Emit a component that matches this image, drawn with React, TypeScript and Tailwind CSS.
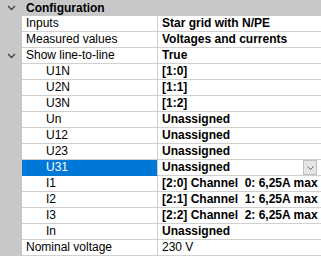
import React from 'react';

type Row = {
  name: string;
  value: string;
  indent?: boolean;
  bold?: boolean;
  expander?: boolean;
  selected?: boolean;
};

const rows: Row[] = [
  { name: 'Inputs', value: 'Star grid with N/PE', bold: true },
  { name: 'Measured values', value: 'Voltages and currents', bold: true },
  { name: 'Show line-to-line', value: 'True', bold: true, expander: true },
  { name: 'U1N', value: '[1:0]', indent: true, bold: true },
  { name: 'U2N', value: '[1:1]', indent: true, bold: true },
  { name: 'U3N', value: '[1:2]', indent: true, bold: true },
  { name: 'Un', value: 'Unassigned', indent: true, bold: true },
  { name: 'U12', value: 'Unassigned', indent: true, bold: true },
  { name: 'U23', value: 'Unassigned', indent: true, bold: true },
  { name: 'U31', value: 'Unassigned', indent: true, bold: true, selected: true },
  { name: 'I1', value: '[2:0] Channel  0: 6,25A max', indent: true, bold: true },
  { name: 'I2', value: '[2:1] Channel  1: 6,25A max', indent: true, bold: true },
  { name: 'I3', value: '[2:2] Channel  2: 6,25A max', indent: true, bold: true },
  { name: 'In', value: 'Unassigned', indent: true, bold: true },
  { name: 'Nominal voltage', value: '230 V' },
];

const Chevron = ({ color = '#404040' }: { color?: string }) => (
  <svg width="9" height="6" viewBox="0 0 9 6">
    <polyline points="1,1 4.5,4.5 8,1" fill="none" stroke={color} strokeWidth="1.3" />
  </svg>
);

const App: React.FC = () => {
  return (
    <div className="w-[321px] h-[256px] overflow-hidden bg-white text-[12px] text-black font-['Liberation_Sans',Arial,sans-serif] select-none">
      {/* category header */}
      <div className="flex h-[16px] bg-[#c8c8c8]">
        <div className="w-[22px] flex items-center justify-center pl-[1px]">
          <Chevron />
        </div>
        <span className="pl-[4px] leading-[16px] font-bold">Configuration</span>
      </div>

      {rows.map((r, i) => (
        <div key={i} className="flex h-[16px]">
          <div className="w-[22px] shrink-0 bg-[#c8c8c8] flex items-center justify-center pl-[1px]">
            {r.expander && <Chevron />}
          </div>
          <div
            className={`w-[136px] shrink-0 border-b border-r border-[#d0d0d0] leading-[15px] whitespace-nowrap ${
              r.indent ? 'pl-[24px]' : 'pl-[4px]'
            } ${r.selected ? 'bg-[#0078d7] text-white border-b-[#0078d7]' : ''}`}
          >
            {r.name}
          </div>
          <div className="flex-1 flex border-b border-[#d0d0d0] pl-[4px] leading-[15px] whitespace-pre">
            <span className={`flex-1 ${r.bold ? 'font-bold' : ''}`}>{r.value}</span>
            {r.selected && (
              <div className="w-[14px] h-[15px] mr-[4px] bg-[#e5e5e5] border border-[#c0c0c0] flex items-center justify-center">
                <svg width="7" height="4" viewBox="0 0 7 4">
                  <polyline points="0.5,0.5 3.5,3.5 6.5,0.5" fill="none" stroke="#606060" strokeWidth="1" />
                </svg>
              </div>
            )}
          </div>
        </div>
      ))}
    </div>
  );
};

export default App;
